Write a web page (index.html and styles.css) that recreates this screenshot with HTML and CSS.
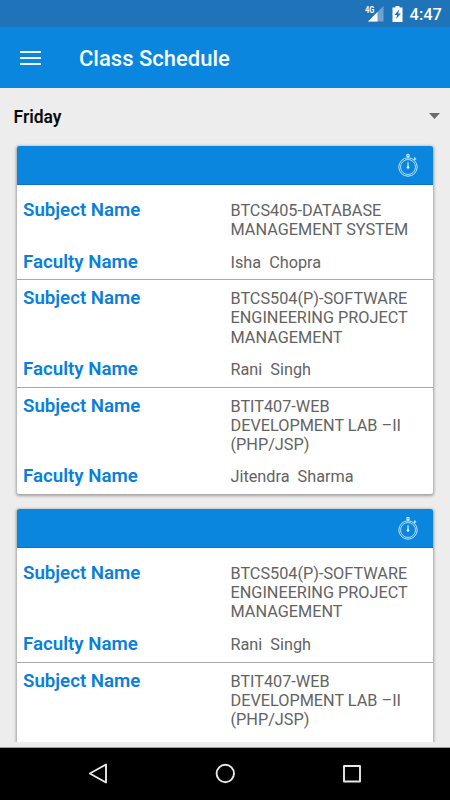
FILE: index.html
```html
<!DOCTYPE html>
<html lang="en">
<head>
<meta charset="utf-8">
<title>Class Schedule</title>
<link rel="stylesheet" href="styles.css">
</head>
<body>
<svg class="defs" width="0" height="0"><symbol id="timer" viewBox="0 0 22 26"><g fill="none" stroke="#c6e4fb"><circle cx="11" cy="15" r="9.200" stroke-width="1"/><circle cx="11" cy="15" r="7.500" stroke-width=".9"/><circle cx="11" cy="3.600" r="1.200" stroke-width="1.300"/><path d="M11 4v2M16.800 8l1.600-1.600M17.200 5.500l1.900 1.900M11 10.300v4.500" stroke-width="1.300"/></g><circle cx="11" cy="15.400" r="1.300" fill="#e4f3ff"/></symbol></svg>
<div class="screen">
  <div class="status">
    <svg class="signal" width="16" height="16" viewBox="0 0 16 16"><path d="M15.500 0v15.500H0z" fill="#6ba4d5"/><path d="M9.500 6v9.500H0z" fill="#fff"/></svg>
    <span class="net">4G</span>
    <svg class="battery" width="12" height="16" viewBox="0 0 12 16"><path d="M3.500 0h4v1.500h3V16H.5V1.500h3z" fill="#fff"/><path d="M7.300 3.500L2.300 9h2.800l-1 4L8.900 7.400H6.200z" fill="#1f73b9"/></svg>
    <span class="clock">4:47</span>
  </div>
  <header class="appbar">
    <svg width="22" height="16" viewBox="0 0 22 16"><path d="M0 2h21M0 8h21M0 14h21" stroke="#f4faff" stroke-width="2.200"/></svg>
    <h1>Class Schedule</h1>
  </header>
  <div class="day"><span>Friday</span><svg width="11" height="6" viewBox="0 0 11 6"><path d="M0 0h11L5.500 6z" fill="#6b6b6b"/></svg></div>
  <main class="list">
    <section class="card">
      <div class="card-head"><svg width="22" height="26"><use href="#timer"/></svg></div>
      <div class="entries">
        <dl><dt>Subject Name</dt><dd>BTCS405-DATABASE<br>MANAGEMENT SYSTEM</dd><dt>Faculty Name</dt><dd>Isha&nbsp; Chopra</dd></dl>
        <dl><dt>Subject Name</dt><dd>BTCS504(P)-SOFTWARE<br>ENGINEERING PROJECT<br>MANAGEMENT</dd><dt>Faculty Name</dt><dd>Rani&nbsp; Singh</dd></dl>
        <dl><dt>Subject Name</dt><dd>BTIT407-WEB<br>DEVELOPMENT LAB –II<br>(PHP/JSP)</dd><dt>Faculty Name</dt><dd>Jitendra&nbsp; Sharma</dd></dl>
      </div>
    </section>
    <section class="card">
      <div class="card-head"><svg width="22" height="26"><use href="#timer"/></svg></div>
      <div class="entries">
        <dl><dt>Subject Name</dt><dd>BTCS504(P)-SOFTWARE<br>ENGINEERING PROJECT<br>MANAGEMENT</dd><dt>Faculty Name</dt><dd>Rani&nbsp; Singh</dd></dl>
        <dl><dt>Subject Name</dt><dd>BTIT407-WEB<br>DEVELOPMENT LAB –II<br>(PHP/JSP)</dd></dl>
      </div>
    </section>
  </main>
  <nav class="nav">
    <svg width="20" height="22" viewBox="0 0 20 22"><path d="M18 1.500v18L1.800 10.500z"/></svg>
    <svg width="20" height="22" viewBox="0 0 20 22"><circle cx="10.300" cy="10.500" r="8.700"/></svg>
    <svg width="20" height="22" viewBox="0 0 20 22"><path d="M2 3h16v15.500H2z"/></svg>
  </nav>
</div>
</body>
</html>
```
FILE: styles.css
```css
* { box-sizing: border-box; }
body { margin: 0; font-family: Roboto, sans-serif; }
.defs { display: block; height: 0; }
.screen {
  width: 450px;
  height: 800px;
  display: flex;
  flex-direction: column;
  background: #ededed;
  overflow: hidden;
}
.status {
  position: relative;
  height: 27px;
  flex: none;
  display: flex;
  align-items: center;
  justify-content: flex-end;
  padding: 1px 8px 0 0;
  background: #1f73b9;
  color: #fff;
}
.signal { margin-right: 8px; }
.net {
  position: absolute;
  left: 365px;
  top: 5px;
  font-size: 9px;
  line-height: 10px;
  font-weight: 700;
  transform: scaleX(.82);
  transform-origin: left;
}
.battery { margin-right: 6px; }
.clock { font-size: 16.500px; font-weight: 500; line-height: 26px; margin-top: 1px; }
.appbar {
  height: 61px;
  flex: none;
  display: flex;
  align-items: center;
  gap: 37px;
  padding: 1px 0 0 20px;
  background: #0a86df;
}
.appbar h1 {
  margin: 2px 0 0;
  color: #f6fbff;
  font-size: 22px;
  font-weight: 500;
  line-height: 28px;
}
.day {
  height: 51px;
  flex: none;
  display: flex;
  align-items: center;
  justify-content: space-between;
  padding: 6px 10px 0 13.500px;
  color: #0c0c0c;
  font-size: 17.500px;
  font-weight: 600;
}
.day svg { margin-top: -2px; }
.list {
  height: 603px;
  flex: none;
  padding: 7px 17.500px 0 17.400px;
  overflow: hidden;
}
.card {
  margin-bottom: 15px;
  border-radius: 2px;
  background: #fff;
  box-shadow: 0 1px 3px 1px rgba(0, 0, 0, .32);
}
.card-head {
  height: 39px;
  display: flex;
  justify-content: flex-end;
  align-items: center;
  padding-right: 14px;
  border-radius: 2px 2px 0 0;
  border-bottom: 1px solid #0874ce;
  background: #0a86df;
}
.entries { padding-top: 6px; }
dl {
  margin: 0;
  height: 107.500px;
  padding: 9.600px 0 0 5.600px;
  display: grid;
  grid-template-columns: 207.500px 1fr;
  align-content: start;
  row-gap: 13.600px;
}
dl + dl { border-top: 1px solid #a9a9a9; padding-top: 8.800px; row-gap: 13.200px; }
.card:first-child dl:first-child { height: 88.300px; }
dt {
  color: #0a7fda;
  font-size: 18.700px;
  font-weight: 600;
  line-height: 19.200px;
}
dd {
  margin: 0;
  color: #636363;
  font-size: 16.250px;
  line-height: 19.200px;
  white-space: nowrap;
}
.nav {
  height: 53px;
  flex: none;
  margin-top: auto;
  display: flex;
  justify-content: space-between;
  align-items: center;
  padding: 0 88px;
  border-top: 1px solid #9d9d9d;
  background: #000;
}
.nav svg { fill: none; stroke: #e8e8e8; stroke-width: 1.900; stroke-linejoin: round; }
```
